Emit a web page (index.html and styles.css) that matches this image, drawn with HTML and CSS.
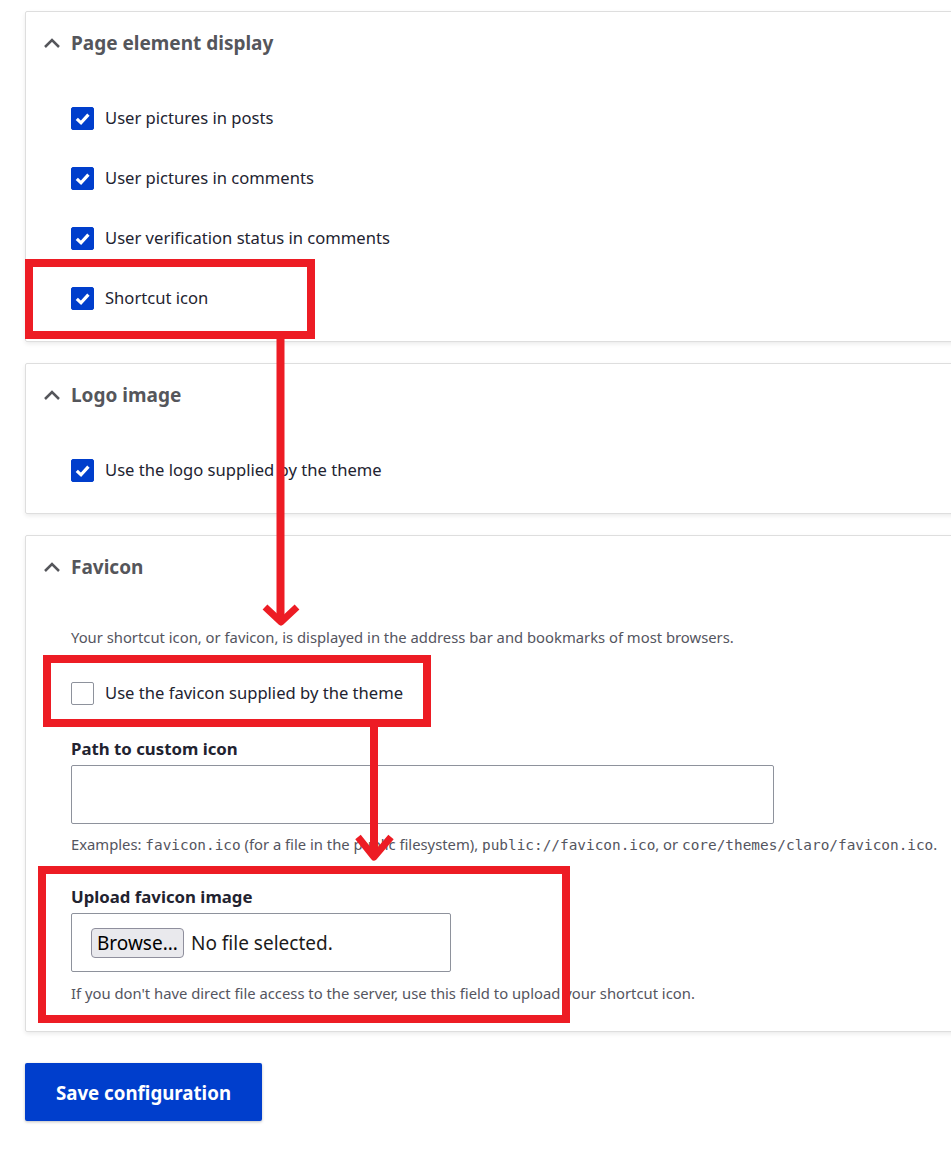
FILE: index.html
```html
<!DOCTYPE html>
<html lang="en">

<head>
    <meta charset="UTF-8">
    <meta name="viewport" content="width=device-width, initial-scale=1.0">
    <title>Appearance settings</title>
    <link rel="stylesheet" href="styles.css">
</head>

<body>
    <div class="page">
        <form class="settings">
            <details class="card" open>
                <summary class="card-title">
                    <svg class="chevron" width="18" height="12" viewBox="0 0 18 12"><path d="M2 10 L9 3 L16 10" /></svg>
                    Page element display
                </summary>
                <div class="card-body">
                    <label class="check"><span class="box checked"><svg viewBox="0 0 21 21"><path d="M4.8 10.8 L9 14.8 L16.4 6.6" /></svg></span>User pictures in posts</label>
                    <label class="check"><span class="box checked"><svg viewBox="0 0 21 21"><path d="M4.8 10.8 L9 14.8 L16.4 6.6" /></svg></span>User pictures in comments</label>
                    <label class="check"><span class="box checked"><svg viewBox="0 0 21 21"><path d="M4.8 10.8 L9 14.8 L16.4 6.6" /></svg></span>User verification status in comments</label>
                    <label class="check"><span class="box checked"><svg viewBox="0 0 21 21"><path d="M4.8 10.8 L9 14.8 L16.4 6.6" /></svg></span>Shortcut icon</label>
                </div>
            </details>

            <details class="card" open>
                <summary class="card-title">
                    <svg class="chevron" width="18" height="12" viewBox="0 0 18 12"><path d="M2 10 L9 3 L16 10" /></svg>
                    Logo image
                </summary>
                <div class="card-body">
                    <label class="check"><span class="box checked"><svg viewBox="0 0 21 21"><path d="M4.8 10.8 L9 14.8 L16.4 6.6" /></svg></span>Use the logo supplied by the theme</label>
                </div>
            </details>

            <details class="card" open>
                <summary class="card-title">
                    <svg class="chevron" width="18" height="12" viewBox="0 0 18 12"><path d="M2 10 L9 3 L16 10" /></svg>
                    Favicon
                </summary>
                <div class="card-body favicon">
                    <p class="help intro">Your shortcut icon, or favicon, is displayed in the address bar and bookmarks of most browsers.</p>
                    <label class="check"><span class="box"></span>Use the favicon supplied by the theme</label>

                    <label class="field-label" for="favicon_path">Path to custom icon</label>
                    <input class="text-input" type="text" id="favicon_path">
                    <p class="help">Examples: <code>favicon.ico</code> (for a file in the public filesystem), <code>public://favicon.ico</code>, or <code>core/themes/claro/favicon.ico</code>.</p>

                    <div class="field-label upload-label">Upload favicon image</div>
                    <div class="file-input">
                        <span class="browse">Browse...</span>
                        <span class="file-name">No file selected.</span>
                    </div>
                    <p class="help">If you don't have direct file access to the server, use this field to upload your shortcut icon.</p>
                </div>
            </details>

            <button type="button" class="save">Save configuration</button>
        </form>

        <!-- annotations drawn over the screenshot -->
        <svg class="marks" width="951" height="1171" viewBox="0 0 951 1171">
            <rect x="29" y="263" width="282" height="72" />
            <rect x="47" y="659" width="380" height="64" />
            <rect x="42" y="870" width="524" height="149" />
            <line x1="280.5" y1="339" x2="280.5" y2="620" />
            <polyline points="265,607 281,622 297,607" />
            <line x1="374" y1="727" x2="374" y2="856" />
            <polyline points="358,837 374,857 391,837" />
        </svg>
    </div>
</body>

</html>
```

FILE: styles.css
```css
body {
    margin: 0;
    font-family: 'Noto Sans', 'Open Sans', sans-serif;
    color: #222330;
    background: #ffffff;
    overflow: hidden;
}

.page {
    position: relative;
    width: 951px;
    min-height: 1171px;
    overflow: hidden;
}

.settings {
    padding: 11px 0 0 25px;
}

.card {
    width: 1000px;
    border: 1px solid #dedede;
    border-radius: 2px;
    box-shadow: 0 2px 4px rgba(0, 0, 0, 0.08);
    margin-bottom: 21px;
}

.card-title {
    list-style: none;
    display: flex;
    align-items: center;
    padding: 15px 0 0 17px;
    height: 32px;
    font-size: 19px;
    font-weight: 700;
    color: #55565b;
}

.card-title::-webkit-details-marker {
    display: none;
}

.chevron {
    margin-right: 10px;
}

.chevron path {
    fill: none;
    stroke: #55565b;
    stroke-width: 2.5;
}

.card-body {
    display: flex;
    flex-direction: column;
    align-items: flex-start;
    gap: 36px;
    padding: 47px 0 31px 45px;
}

.check {
    display: flex;
    align-items: center;
    height: 24px;
    font-size: 16.6px;
    line-height: 24px;
}

.box {
    width: 21px;
    height: 21px;
    border: 1px solid #8e929c;
    border-radius: 2px;
    margin-right: 11px;
    background: #ffffff;
}

.box.checked {
    border-color: #003ecc;
    background: #003ecc;
}

.box svg {
    display: block;
    width: 21px;
    height: 21px;
}

.box path {
    fill: none;
    stroke: #ffffff;
    stroke-width: 3.2;
}

.favicon {
    gap: 0;
    padding-top: 44px;
    padding-bottom: 28px;
}

.help {
    margin: 0;
    font-size: 14.8px;
    line-height: 20px;
    color: #545560;
}

.help code {
    font-family: 'DejaVu Sans Mono', monospace;
    font-size: 14.4px;
}

.intro {
    margin-bottom: 34px;
}

.field-label {
    margin-top: 32px;
    font-size: 16.8px;
    font-weight: 700;
    line-height: 24px;
}

.upload-label {
    margin-top: 30px;
}

.text-input {
    box-sizing: border-box;
    width: 703px;
    height: 59px;
    margin: 4px 0 10px;
    border: 1px solid #8e929c;
    border-radius: 2px;
}

.file-input {
    box-sizing: border-box;
    display: flex;
    align-items: center;
    width: 380px;
    height: 59px;
    margin: 4px 0 11px;
    padding-left: 19px;
    border: 1px solid #8e929c;
    border-radius: 2px;
    font-size: 19px;
}

.browse {
    box-sizing: border-box;
    height: 30px;
    padding: 0 5px;
    line-height: 28px;
    border: 1px solid #8f8f9d;
    border-radius: 4px;
    background: #e9e9ed;
    color: #000000;
}

.file-name {
    margin-left: 7px;
    color: #1b1b1b;
}

.save {
    margin-top: 10px;
    width: 237px;
    height: 58px;
    border: none;
    border-radius: 2px;
    background: #003ecc;
    color: #ffffff;
    font-family: inherit;
    font-size: 18.7px;
    font-weight: 700;
    box-shadow: 0 1px 3px rgba(0, 0, 0, 0.25);
}

.marks {
    position: absolute;
    top: 0;
    left: 0;
    pointer-events: none;
}

.marks rect,
.marks line,
.marks polyline {
    fill: none;
    stroke: #ed1c24;
    stroke-width: 8;
}

.marks polyline {
    stroke-width: 7;
    stroke-linejoin: round;
}
```
